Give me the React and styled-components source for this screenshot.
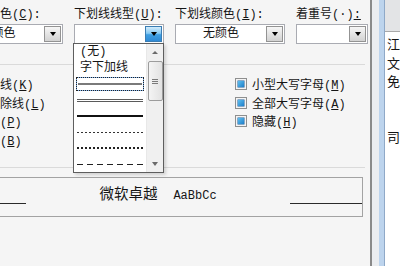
import React from "react";
import styled, { createGlobalStyle } from "styled-components";

const GlobalStyle = createGlobalStyle`
  html, body {
    margin: 0;
    padding: 0;
  }

  body {
    width: 400px;
    height: 266px;
    overflow: hidden;
    background: #f5f5f5;
    color: #151515;
    font-family: "Liberation Mono", "Noto Sans CJK SC", monospace;
    font-size: 12px;
  }
`;

const Screen = styled.div`
  display: flex;
  width: 400px;
  height: 266px;
  overflow: hidden;
`;

/* the dialog starts left of the visible area, its first column is cut */
const Dialog = styled.div`
  flex: none;
  width: 420px;
  margin-left: -50px;
  padding-top: 7px;
  background: #f5f5f5;
`;

const FieldGrid = styled.div`
  display: grid;
  grid-template-columns: 113px 90px 110px 72px;
  column-gap: 11px;
  row-gap: 1px;
`;

const Label = styled.div`
  line-height: 16px;
  white-space: nowrap;
  padding-left: ${(p) => p.$indent || 0}px;
`;

const Combo = styled.div`
  position: relative;
  box-sizing: border-box;
  height: 20px;
  display: flex;
  align-items: center;
  padding-right: 1px;
  background: #fff;
  border: 1px solid #a9abb2;
`;

const ComboText = styled.div`
  flex: 1;
  text-align: center;
  line-height: 18px;
  white-space: nowrap;
`;

const ComboButton = styled.div`
  box-sizing: border-box;
  width: 17px;
  height: 16px;
  display: flex;
  align-items: center;
  justify-content: center;
  border: 1px solid ${(p) => (p.$active ? "#3a7db3" : "#939393")};
  background: ${(p) =>
    p.$active
      ? "linear-gradient(#d3ecfb, #86c9f3 45%, #3f9fe2 55%, #2f8ad6)"
      : "linear-gradient(#f6f6f6, #e4e4e4 50%, #d2d2d2)"};
`;

const Arrow = styled.span`
  width: 0;
  height: 0;
  border-left: 3.5px solid transparent;
  border-right: 3.5px solid transparent;
  border-top: 4px solid ${(p) => p.$color || "#000"};
`;

const UpArrow = styled.span`
  width: 0;
  height: 0;
  border-left: 3px solid transparent;
  border-right: 3px solid transparent;
  border-bottom: 3px solid #6a6a6a;
`;

const DropList = styled.div`
  position: absolute;
  top: 100%;
  left: -2px;
  z-index: 5;
  box-sizing: border-box;
  width: 91px;
  height: 130px;
  display: flex;
  background: #fff;
  border: 1px solid #5e5e5e;
  box-shadow: 2px 2px 3px rgba(0, 0, 0, 0.15);
`;

const Items = styled.div`
  flex: 1;
  display: flex;
  flex-direction: column;
`;

const TextItem = styled.div`
  height: 16px;
  line-height: 16px;
  padding-left: 6px;
  white-space: nowrap;
`;

const LineItem = styled.div`
  box-sizing: border-box;
  height: 16px;
  display: flex;
  align-items: center;
  padding: 0 3px;
`;

const Selected = styled.div`
  box-sizing: border-box;
  flex: 1;
  height: 14px;
  margin: 0 -1px;
  display: flex;
  align-items: center;
  padding: 0 1px;
  border: 1px solid #7fb2ea;
  outline: 1px dotted #222;
  outline-offset: -1px;
`;

const Stroke = styled.div`
  flex: 1;
  height: 0;
  border-top: ${(p) => p.$w}px solid ${(p) => p.$color || "#000"};
`;

const DoubleStroke = styled.div`
  flex: 1;
  height: 1px;
  border-top: 1px solid #5a5a5a;
  border-bottom: 1px solid #5a5a5a;
`;

const Dashes = styled.div`
  flex: 1;
  height: ${(p) => p.$h}px;
  background: repeating-linear-gradient(
    to right,
    ${(p) => p.$color} 0 ${(p) => p.$dash}px,
    transparent ${(p) => p.$dash}px ${(p) => p.$dash + p.$gap}px
  );
`;

const Scrollbar = styled.div`
  flex: none;
  width: 16px;
  display: flex;
  flex-direction: column;
  align-items: center;
  background: #f0f0f0;
  border-left: 1px solid #e8e8e8;
`;

const ScrollButton = styled.div`
  height: 17px;
  width: 100%;
  display: flex;
  align-items: center;
  justify-content: center;
`;

const Thumb = styled.div`
  box-sizing: border-box;
  width: 15px;
  height: 40px;
  display: flex;
  flex-direction: column;
  align-items: center;
  justify-content: center;
  gap: 1px;
  border: 1px solid #9c9c9c;
  border-radius: 2px;
  background: linear-gradient(to right, #f4f4f4, #e2e2e2);
`;

const Grip = styled.span`
  width: 6px;
  height: 1px;
  background: #7a7a7a;
`;

const Spacer = styled.div`
  flex: 1;
`;

const Rule = styled.div`
  height: 1px;
  margin: ${(p) => p.$top}px 5px 0 0;
  background: #dadada;
`;

const Effects = styled.div`
  display: grid;
  grid-template-columns: 276px auto;
  grid-template-rows: repeat(4, 18.5px);
  grid-auto-flow: column;
  margin-top: 10px;
  padding-left: 9px;
`;

const Check = styled.label`
  display: flex;
  align-items: center;
  gap: 5px;
  white-space: nowrap;
`;

const Box = styled.span`
  box-sizing: border-box;
  width: 12px;
  height: 12px;
  padding: 2px;
  border: 1px solid #8e8f8f;
  background: #f4f4f4;

  &::after {
    content: "";
    display: block;
    width: 100%;
    height: 100%;
    background: linear-gradient(135deg, #5fc0f0, #1e7ec8);
    box-shadow: 0 0 0 0.5px #1c5f9a;
  }
`;

const Preview = styled.div`
  box-sizing: border-box;
  height: 40px;
  margin: 9px 7px 0 3px;
  display: flex;
  align-items: flex-end;
  justify-content: space-between;
  padding-bottom: 12px;
  border: 1px solid #a3a3a3;
`;

const PageLine = styled.div`
  width: 72px;
  height: 1px;
  background: #2a2a2a;
`;

const Sample = styled.div`
  display: flex;
  align-items: baseline;
  margin-bottom: -1px;
  line-height: 17px;
`;

const SampleCjk = styled.span`
  font-family: "Noto Sans CJK SC", sans-serif;
  font-size: 14.5px;
`;

const SampleLatin = styled.span`
  margin-left: 16px;
  font-family: "Liberation Mono", monospace;
  font-size: 12px;
`;

const ClientEdge = styled.div`
  flex: none;
  width: 2px;
  background: #8a8a8a;
`;

const FramePane = styled.div`
  flex: none;
  width: 7px;
  background: #ebedf0;
`;

const FrameBlue = styled.div`
  flex: none;
  width: 5px;
  background: #bdd4ed;
  border-right: 1px solid #8fa9c8;
`;

const Document = styled.div`
  flex: 1;
  min-width: 0;
  overflow: hidden;
  background: #fff;
`;

const DocBar = styled.div`
  height: 31px;
  background: #e3e4e6;
  border-bottom: 1px solid #a9a9a9;
`;

const DocText = styled.div`
  padding: 3px 0 0 2px;
  font-family: "Noto Sans CJK SC", sans-serif;
  font-size: 13px;
  line-height: 18.5px;
  white-space: nowrap;
`;

const fields = [
  { label: "字体颜色", key: "C", indent: 14, value: "无颜色" },
  { label: "下划线线型", key: "U", value: "", active: true, open: true },
  { label: "下划线颜色", key: "I", value: "无颜色" },
  { label: "着重号", key: "·", plainKey: true, value: "" },
];

const effects = [
  ["删除线", "K"],
  ["双删除线", "L"],
  ["上标", "P"],
  ["下标", "B"],
  ["小型大写字母", "M"],
  ["全部大写字母", "A"],
  ["隐藏", "H"],
];

const docLines = ["江西", "文件", "免费", "", "", "司机"];

function UnderlineList() {
  return (
    <DropList>
      <Items>
        <TextItem>(无)</TextItem>
        <TextItem>字下加线</TextItem>
        <LineItem>
          <Selected>
            <Stroke $w={2} $color="#7a7a7a" />
          </Selected>
        </LineItem>
        <LineItem>
          <DoubleStroke />
        </LineItem>
        <LineItem>
          <Stroke $w={2} $color="#111" />
        </LineItem>
        <LineItem>
          <Dashes $h={1} $dash={2} $gap={2} $color="#333" />
        </LineItem>
        <LineItem>
          <Dashes $h={2} $dash={2} $gap={2} $color="#222" />
        </LineItem>
        <LineItem>
          <Dashes $h={1} $dash={6} $gap={4} $color="#222" />
        </LineItem>
      </Items>
      <Scrollbar>
        <ScrollButton>
          <UpArrow />
        </ScrollButton>
        <Thumb>
          <Grip />
          <Grip />
          <Grip />
        </Thumb>
        <Spacer />
        <ScrollButton>
          <Arrow $color="#6a6a6a" />
        </ScrollButton>
      </Scrollbar>
    </DropList>
  );
}

export default function App() {
  return (
    <>
      <GlobalStyle />
      <Screen>
        <Dialog>
          <FieldGrid>
            {fields.map((f) =>
              f.plainKey ? (
                <Label key={f.label} $indent={f.indent}>
                  {f.label}({f.key})<u>:</u>
                </Label>
              ) : (
                <Label key={f.label} $indent={f.indent}>
                  {f.label}(<u>{f.key}</u>):
                </Label>
              )
            )}
            {fields.map((f) => (
              <Combo key={f.label}>
                <ComboText>{f.value}</ComboText>
                <ComboButton $active={f.active}>
                  <Arrow />
                </ComboButton>
                {f.open && <UnderlineList />}
              </Combo>
            ))}
          </FieldGrid>

          <Rule $top={20} />

          <Effects>
            {effects.map(([name, key]) => (
              <Check key={name}>
                <Box />
                <span>
                  {name}(<u>{key}</u>)
                </span>
              </Check>
            ))}
          </Effects>

          <Rule $top={18} />

          <Preview>
            <PageLine />
            <Sample>
              <SampleCjk>微软卓越</SampleCjk>
              <SampleLatin>AaBbCc</SampleLatin>
            </Sample>
            <PageLine />
          </Preview>
        </Dialog>
        <ClientEdge />
        <FramePane />
        <FrameBlue />
        <Document>
          <DocBar />
          <DocText>
            {docLines.map((line, i) => (
              <div key={i}>{line || "\u00a0"}</div>
            ))}
          </DocText>
        </Document>
      </Screen>
    </>
  );
}
